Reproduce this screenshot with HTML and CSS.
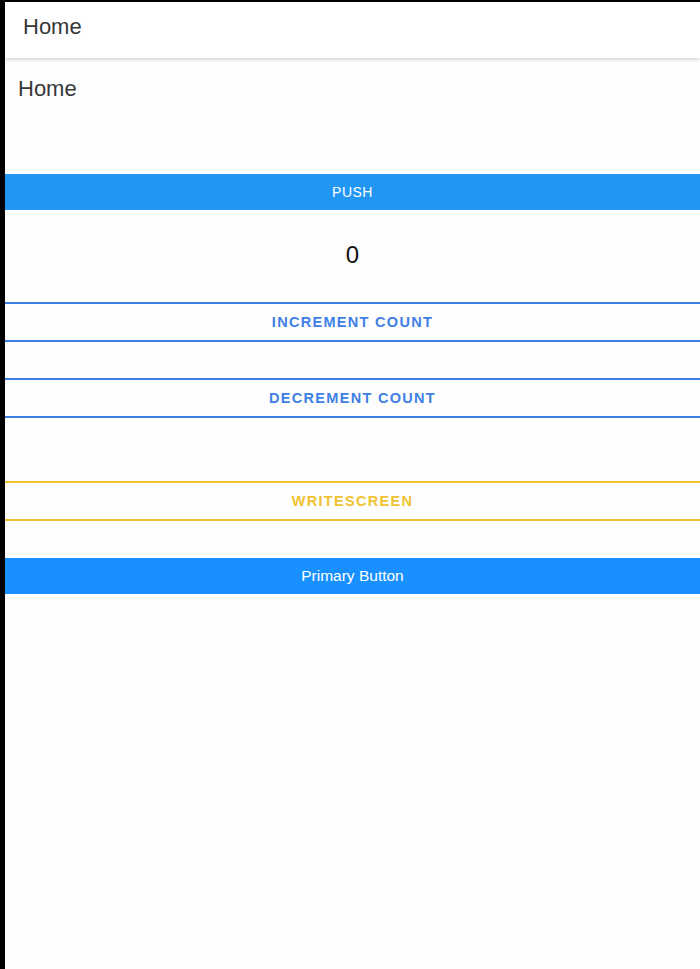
FILE: index.html
```html
<!DOCTYPE html>
<html>
<head>
<meta charset="utf-8">
<link rel="stylesheet" href="styles.css">
</head>
<body>
<div class="screen">
  <header class="nav">
    <span class="nav-title">Home</span>
  </header>
  <main class="content">
    <h1 class="page-title">Home</h1>
    <button class="btn btn-solid">PUSH</button>
    <div class="counter">0</div>
    <button class="btn btn-outline btn-blue">INCREMENT COUNT</button>
    <button class="btn btn-outline btn-blue gap-36">DECREMENT COUNT</button>
    <button class="btn btn-outline btn-yellow gap-63">WRITESCREEN</button>
    <button class="btn btn-primary gap-37">Primary Button</button>
  </main>
</div>
</body>
</html>
```

FILE: styles.css
```css
html, body {
  margin: 0;
  padding: 0;
  background: #000;
  height: 100%;
}
body {
  padding: 2px 0 0 5px;
  box-sizing: border-box;
  font-family: "Liberation Sans", Arial, Helvetica, sans-serif;
}
.screen {
  background: #fefefe;
  height: 967px;
  display: flex;
  flex-direction: column;
  overflow: hidden;
}
.nav {
  height: 56px;
  box-sizing: border-box;
  padding: 0 0 6px 18px;
  display: flex;
  align-items: center;
  background: #fff;
  box-shadow: 0 1px 4px rgba(0, 0, 0, 0.22);
  position: relative;
  z-index: 1;
}
.nav-title {
  font-size: 22px;
  color: #383838;
}
.content {
  display: flex;
  flex-direction: column;
}
.page-title {
  margin: 18px 0 72px 13px;
  font-size: 22px;
  line-height: 26px;
  font-weight: normal;
  color: #383838;
}
.btn {
  display: flex;
  align-items: center;
  justify-content: center;
  width: 100%;
  margin: 0;
  padding: 0;
  border: 0;
  font-family: inherit;
  background: transparent;
}
.btn-solid {
  height: 36px;
  background: #2196f3;
  color: #fff;
  font-size: 14px;
  letter-spacing: 0.5px;
}
.counter {
  height: 92px;
  box-sizing: border-box;
  padding-bottom: 2px;
  display: flex;
  align-items: center;
  justify-content: center;
  font-size: 24px;
  color: #111;
}
.btn-outline {
  height: 40px;
  box-sizing: border-box;
  border-top: 2px solid;
  border-bottom: 2px solid;
  font-size: 14.5px;
  font-weight: 600;
  letter-spacing: 1.3px;
}
.btn-blue {
  border-color: #3f80e6;
  color: #3f80e6;
}
.btn-yellow {
  border-color: #f0c232;
  color: #f0c232;
}
.btn-primary {
  height: 36px;
  background: #1890ff;
  color: #fff;
  font-size: 15.5px;
}
.gap-36 { margin-top: 36px; }
.gap-63 { margin-top: 63px; }
.gap-37 { margin-top: 37px; }
```
